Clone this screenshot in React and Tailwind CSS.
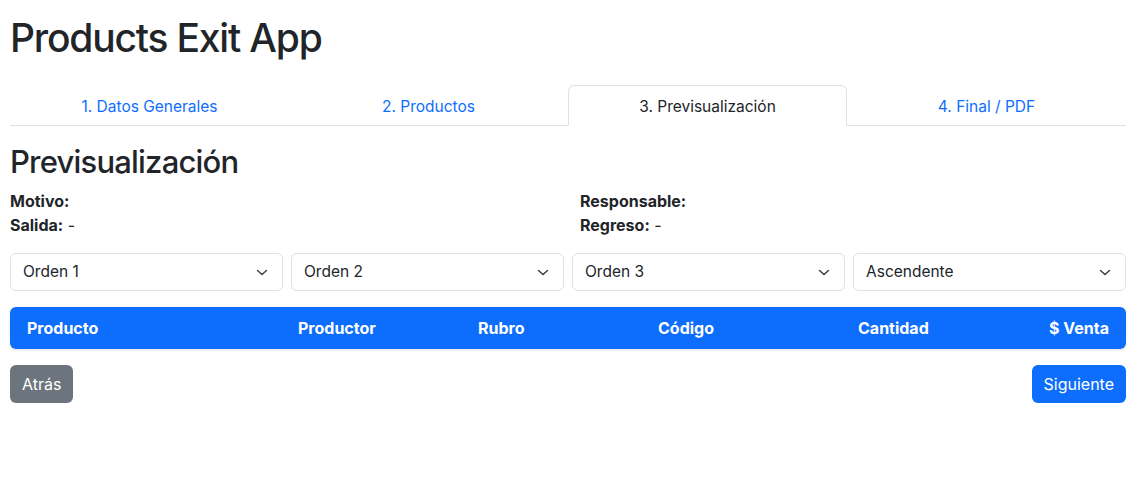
import React, { useState } from 'react';

const tabs = ['1. Datos Generales', '2. Productos', '3. Previsualización', '4. Final / PDF'];
const ordenes = ['Orden 1', 'Orden 2', 'Orden 3', 'Ascendente'];

// Flecha del select (igual que la de Bootstrap)
const Chevron = () => (
  <svg width="16" height="16" viewBox="0 0 16 16" className="shrink-0">
    <path d="M3.5 6.5 8 10.5l4.5-4" fill="none" stroke="#343a40" strokeWidth="1.4" strokeLinecap="round" strokeLinejoin="round" />
  </svg>
);

const App = () => {
  const [active, setActive] = useState(2);

  return (
    <div
      className="min-h-[497px] bg-white text-[#212529] pt-[14px] pl-[10px] pr-[18px]"
      style={{ fontFamily: 'Inter, "Noto Sans", sans-serif' }}
    >
      <h1 className="text-[39px] leading-[47px] font-medium tracking-[-1.2px] mb-[24px]">Products Exit App</h1>

      {/* Tabs */}
      <div className="flex border-b border-[#dee2e6]">
        {tabs.map((t, i) => (
          <button
            key={t}
            onClick={() => setActive(i)}
            className={
              i === active
                ? 'flex-1 h-[41px] -mb-px pt-[2px] text-[15.5px] text-[#212529] bg-white border border-[#dee2e6] border-b-white rounded-t-[6px]'
                : 'flex-1 h-[41px] -mb-px pt-[2px] text-[15.5px] text-[#0d6efd] border border-transparent'
            }
          >
            {t}
          </button>
        ))}
      </div>

      <h2 className="mt-[17px] mb-[8px] text-[31px] leading-[38px] font-medium tracking-[-0.8px]">Previsualización</h2>

      {/* Datos */}
      <div className="grid grid-cols-2 gap-x-6 text-[16px] leading-6">
        <div>
          <div><span className="font-bold">Motivo:</span></div>
          <div><span className="font-bold">Salida:</span> -</div>
        </div>
        <div>
          <div><span className="font-bold">Responsable:</span></div>
          <div><span className="font-bold">Regreso:</span> -</div>
        </div>
      </div>

      {/* Orden */}
      <div className="grid grid-cols-4 gap-2 mt-4">
        {ordenes.map((o) => (
          <div
            key={o}
            className="h-[38px] flex items-center justify-between pl-3 pr-[12px] border border-[#dee2e6] rounded-[6px] text-[15.5px]"
          >
            <span>{o}</span>
            <Chevron />
          </div>
        ))}
      </div>

      {/* Tabla */}
      <div className="mt-4 h-[42px] bg-[#0d6efd] rounded-[6px] shadow-[0_1px_3px_rgba(0,0,0,0.12)] px-[17px] grid grid-cols-[271px_180px_180px_200px_1fr_auto] items-center text-white font-bold text-[16px]">
        <span>Producto</span>
        <span>Productor</span>
        <span>Rubro</span>
        <span>Código</span>
        <span>Cantidad</span>
        <span className="text-right">$ Venta</span>
      </div>

      {/* Botones */}
      <div className="mt-4 flex justify-between">
        <button className="h-[38px] px-3 rounded-[6px] bg-[#6c757d] text-white text-[16px]">Atrás</button>
        <button className="h-[38px] px-3 rounded-[6px] bg-[#0d6efd] text-white text-[16px]">Siguiente</button>
      </div>
    </div>
  );
};

export default App;
